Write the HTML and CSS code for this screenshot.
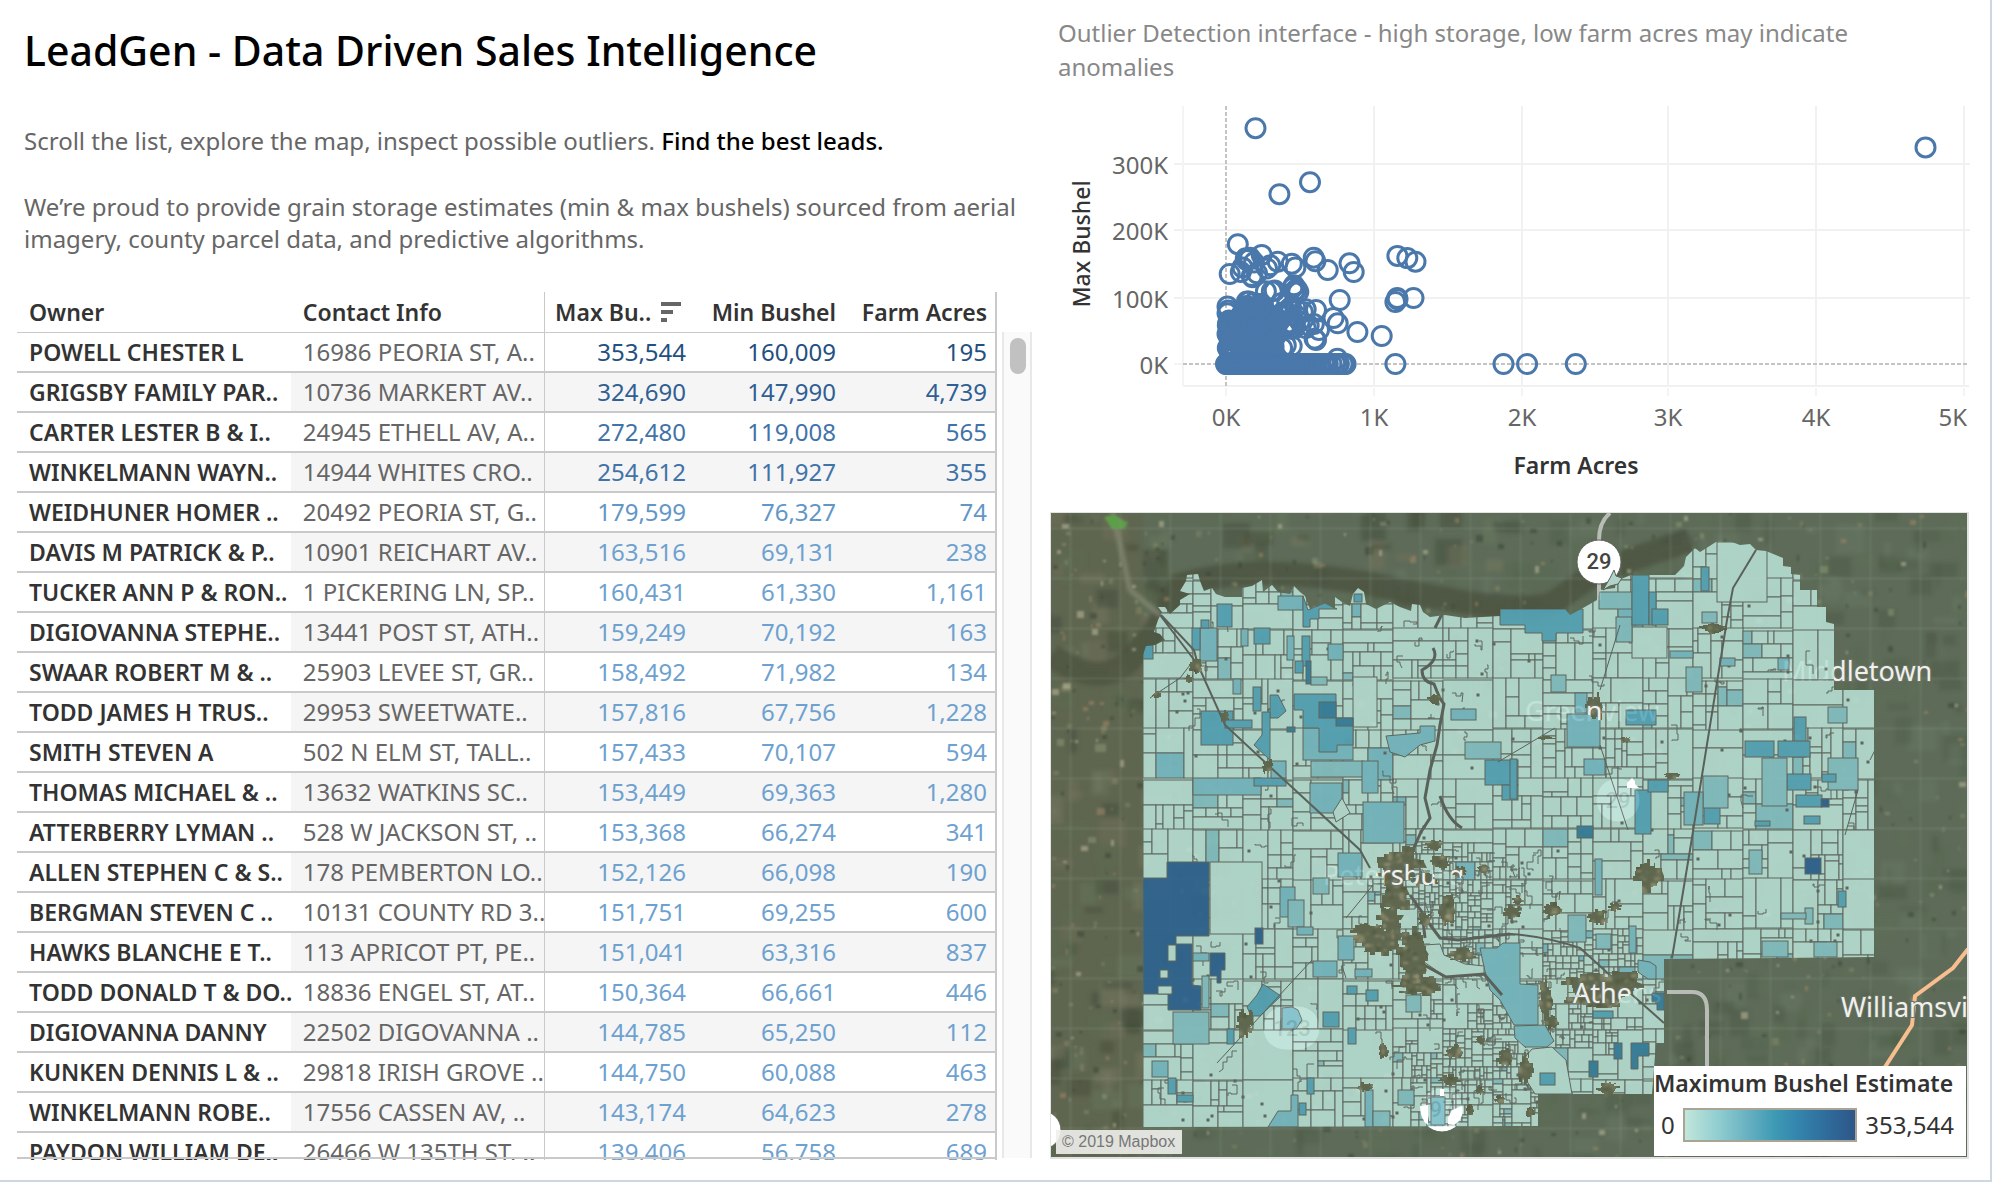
FILE: index.html
```
<!DOCTYPE html>
<html lang="en">
<head>
<meta charset="utf-8">
<title>LeadGen - Data Driven Sales Intelligence</title>
<link rel="stylesheet" href="styles.css">
</head>
<body>
<main class="dashboard">
  <section class="leads">
    <header class="intro">
      <h1>LeadGen - Data Driven Sales Intelligence</h1>
      <p>Scroll the list, explore the map, inspect possible outliers. <strong>Find the best leads.</strong></p>
      <p>We’re proud to provide grain storage estimates (min &amp; max bushels) sourced from aerial imagery, county parcel data, and predictive algorithms.</p>
    </header>
    <div class="list">
      <div class="list-view">
        <table>
          <colgroup><col class="w-owner"><col class="w-contact"><col><col><col></colgroup>
          <thead>
            <tr><th>Owner</th><th>Contact Info</th><th><span class="sortable">Max Bu.. <svg class="sort" viewBox="0 0 20 20" aria-hidden="true"><path d="M0 0h20v4H0zM0 8h12v4H0zM0 16h6v4H0z"/></svg></span></th><th>Min Bushel</th><th>Farm Acres</th></tr>
          </thead>
          <tbody>
            <tr class="t1"><th scope="row">POWELL CHESTER L</th><td>16986 PEORIA ST, A..</td><td>353,544</td><td>160,009</td><td>195</td></tr>
            <tr class="t2"><th scope="row">GRIGSBY FAMILY PAR..</th><td>10736 MARKERT AV..</td><td>324,690</td><td>147,990</td><td>4,739</td></tr>
            <tr class="t3"><th scope="row">CARTER LESTER B &amp; I..</th><td>24945 ETHELL AV, A..</td><td>272,480</td><td>119,008</td><td>565</td></tr>
            <tr class="t3"><th scope="row">WINKELMANN WAYN..</th><td>14944 WHITES CRO..</td><td>254,612</td><td>111,927</td><td>355</td></tr>
            <tr class="t4"><th scope="row">WEIDHUNER HOMER ..</th><td>20492 PEORIA ST, G..</td><td>179,599</td><td>76,327</td><td>74</td></tr>
            <tr><th scope="row">DAVIS M PATRICK &amp; P..</th><td>10901 REICHART AV..</td><td>163,516</td><td>69,131</td><td>238</td></tr>
            <tr><th scope="row">TUCKER ANN P &amp; RON..</th><td>1 PICKERING LN, SP..</td><td>160,431</td><td>61,330</td><td>1,161</td></tr>
            <tr><th scope="row">DIGIOVANNA STEPHE..</th><td>13441 POST ST, ATH..</td><td>159,249</td><td>70,192</td><td>163</td></tr>
            <tr><th scope="row">SWAAR ROBERT M &amp; ..</th><td>25903 LEVEE ST, GR..</td><td>158,492</td><td>71,982</td><td>134</td></tr>
            <tr><th scope="row">TODD JAMES H TRUS..</th><td>29953 SWEETWATE..</td><td>157,816</td><td>67,756</td><td>1,228</td></tr>
            <tr><th scope="row">SMITH STEVEN A</th><td>502 N ELM ST, TALL..</td><td>157,433</td><td>70,107</td><td>594</td></tr>
            <tr><th scope="row">THOMAS MICHAEL &amp; ..</th><td>13632 WATKINS SC..</td><td>153,449</td><td>69,363</td><td>1,280</td></tr>
            <tr><th scope="row">ATTERBERRY LYMAN ..</th><td>528 W JACKSON ST, ..</td><td>153,368</td><td>66,274</td><td>341</td></tr>
            <tr><th scope="row">ALLEN STEPHEN C &amp; S..</th><td>178 PEMBERTON LO..</td><td>152,126</td><td>66,098</td><td>190</td></tr>
            <tr><th scope="row">BERGMAN STEVEN C ..</th><td>10131 COUNTY RD 3..</td><td>151,751</td><td>69,255</td><td>600</td></tr>
            <tr><th scope="row">HAWKS BLANCHE E T..</th><td>113 APRICOT PT, PE..</td><td>151,041</td><td>63,316</td><td>837</td></tr>
            <tr><th scope="row">TODD DONALD T &amp; DO..</th><td>18836 ENGEL ST, AT..</td><td>150,364</td><td>66,661</td><td>446</td></tr>
            <tr><th scope="row">DIGIOVANNA DANNY</th><td>22502 DIGOVANNA ..</td><td>144,785</td><td>65,250</td><td>112</td></tr>
            <tr><th scope="row">KUNKEN DENNIS L &amp; ..</th><td>29818 IRISH GROVE ..</td><td>144,750</td><td>60,088</td><td>463</td></tr>
            <tr><th scope="row">WINKELMANN ROBE..</th><td>17556 CASSEN AV, ..</td><td>143,174</td><td>64,623</td><td>278</td></tr>
            <tr><th scope="row">PAYDON WILLIAM DE..</th><td>26466 W 135TH ST, ..</td><td>139,406</td><td>56,758</td><td>689</td></tr>
          </tbody>
        </table>
      </div>
      <div class="scrollbar"><div class="thumb"></div></div>
    </div>
  </section>

  <section class="visuals">
    <h2>Outlier Detection interface - high storage, low farm acres may indicate anomalies</h2>
    <svg class="scatter" viewBox="0 0 919 397" role="img" aria-label="Max Bushel by Farm Acres">
      <path class="grid" d="M324 6v280M472 6v280M618 6v280M766 6v280M914 6v280M124 64h796M124 130h796M124 198h796M133 286h786"/>
      <path class="edge" d="M133 6v280M124 264h9M176 288v8M324 288v8M472 288v8M618 288v8M766 288v8M914 288v8"/>
      <path class="zero" d="M176 6v280M133 264h786"/>
      <g id="marks" class="marks"></g>
      <g class="tick end"><text x="118" y="74">300K</text><text x="118" y="140">200K</text><text x="118" y="208">100K</text><text x="118" y="274">0K</text><text x="917" y="326">5K</text></g>
      <g class="tick mid"><text x="176" y="326">0K</text><text x="324" y="326">1K</text><text x="472" y="326">2K</text><text x="618" y="326">3K</text><text x="766" y="326">4K</text></g>
      <text class="axis" x="526" y="374">Farm Acres</text>
      <text class="axis y" transform="translate(40 144) rotate(-90)">Max Bushel</text>
    </svg>
    <div class="map">
      <svg class="map-art" viewBox="1051 513 916 644" preserveAspectRatio="xMinYMin slice" role="img" aria-label="Parcel map of maximum bushel estimates">
        <defs>
          <filter id="soft" x="0" y="0" width="1" height="1"><feGaussianBlur stdDeviation="2"/></filter>
          <filter id="hazy" x="0" y="0" width="1" height="1"><feGaussianBlur stdDeviation="1"/></filter>
          <clipPath id="county"><path d="M1143 662V655L1146 646 1155 645 1165 640 1160 634 1154 632 1158 620 1162 612 1158 607 1165 607 1170 614 1180 605 1180 600 1190 594 1180 591 1186 581 1187 575 1198 574 1200 581 1204 591 1212 588 1216 594 1225 597 1242 597V588L1252 586 1262 580 1263 592 1272 585 1278 592 1290 594 1294 586 1300 592 1305 596 1310 609 1325 603 1335 609V597L1342 602 1350 606 1353 594 1358 588 1364 592 1366 604 1376 609 1390 602 1400 607 1411 611 1412 604 1420 605 1423 612 1430 617 1445 615 1465 618 1500 616V609H1565L1570 615 1583 608 1597 600 1600 590 1615 588 1616 581 1631 575H1675L1684 566 1686 557 1695 548 1700 552 1716 542H1732L1740 545 1750 544 1756 550 1766 551 1783 558V566L1791 567V574L1800 575V590H1817V607H1826V622L1834 624V690H1874V957L1664 959V1043H1656L1652 1094H1538V1126L1143 1127Z"/></clipPath>
          <mask id="holes"><path fill="#fff" d="M1051 513h916v644h-916z"/><g id="towns-mask" fill="#000"></g></mask>
        </defs>
        <path fill="#5d6b58" d="M1051 513h916v644h-916z"/>
        <g id="ground" filter="url(#soft)"></g>
        <g id="specks" filter="url(#hazy)"></g>
        <g id="towns"></g>
        <path class="highway" d="M1610 513Q1599 522 1599 540V600M1667 992H1692Q1707 992 1707 1010V1070"/>
        <path class="interstate" d="M1968 949L1953 968 1915 996 1912 1025 1885 1067"/>
        <g class="place"><text x="1782" y="681">Middletown</text><text x="1525" y="721">Greenview</text><text x="1323" y="885">Petersburg</text><text x="1573" y="1003">Athens</text><text x="1841" y="1017">Williamsville</text></g>
        <g class="shield"><circle cx="1599" cy="562" r="22"/><circle cx="1618" cy="800" r="22"/><rect x="1263" y="1006" width="57" height="44" rx="22"/><circle cx="1442" cy="1110" r="22"/><circle cx="1042" cy="1130" r="19"/><text x="1599" y="569">29</text><text x="1618" y="808">29</text><text x="1292" y="1036">123</text><text x="1442" y="1117">97</text></g>
        <g clip-path="url(#county)"><g mask="url(#holes)">
          <g class="parcels">
            <path fill="#b9e1d5" d="M1051 513h916v644h-916z"/>
            <g id="parcels"></g>
            <path class="rail" d="M1160 615L1198 665 1225 725 1268 765 1360 850 1370 868M1161 615L1194 650 1198 665M1756 550L1733 588 1727 620 1690 850 1672 958M1510 934Q1545 936 1580 948L1612 977 1664 1023"/>
            <path class="lane" d="M1312 960L1217 1063M1373 885L1346 918M1555 728L1498 762M1600 745L1628 830M1150 698L1180 678 1190 665M1858 790L1845 835M1900 700L1870 760M1620 625L1600 690"/>
            <path class="river" d="M1433 648Q1440 660 1422 670 1422 682 1434 684 1440 700 1444 704L1440 725 1437 745 1430 770 1425 798 1430 818 1421 832 1412 852 1410 862M1442 614L1435 628M1410 895L1422 912 1425 938M1425 918L1440 938 1458 940 1510 934M1424 965L1446 977 1484 974 1502 995M1440 796Q1448 820 1462 828"/>
          </g>
        </g></g>
        <g fill="#fff"><path d="M1627 783l5-5 3 3v3l4 4h-12zM1420 1106l8-1v20q-8-6-8-19zM1440 1089h4v7h-4zM1448 1124v-6l4-8 10-4q3 12-8 19z"/></g>
        <path fill="#b0d5c8" stroke="#5c6059" d="M1610 578l4-8 2 6 6 2-4 6-8 2-7 4z"/>
      </svg>
      <span class="credit">© 2019 Mapbox</span>
      <aside class="legend">
        <h3>Maximum Bushel Estimate</h3>
        <div class="scale"><span>0</span><div class="ramp"></div><span>353,544</span></div>
      </aside>
    </div>
  </section>
</main>
<script src="charts.js"></script>
</body>
</html>
```
FILE: styles.css
```
* { box-sizing: border-box; }

body {
  margin: 0;
  background: #fff;
  color: #666;
  font: 24px/32px "Noto Sans", sans-serif;
}

h1, h2, h3, p { margin: 0; font-weight: 400; }

.dashboard {
  display: grid;
  grid-template-columns: minmax(0, 1032fr) minmax(0, 958fr);
  height: 100vh;
  min-height: 800px;
  border-right: 2px solid #cdd7e2;
  border-bottom: 2px solid #cdd7e2;
}

.leads {
  display: flex;
  flex-direction: column;
  min-height: 0;
  padding: 0 0 20px 17px;
}

.intro { padding: 18px 8px 37px 7px; }
.intro h1 { margin-bottom: 43px; color: #000; font-size: 41px; font-weight: 500; line-height: 64px; }
.intro p + p { margin-top: 34px; }
.intro strong { color: #000; font-weight: 500; }

.list { display: flex; flex: 1; gap: 5px; min-height: 0; }
.list-view { position: relative; flex: 1; overflow: hidden; }
.list-view::after {
  content: "";
  position: absolute;
  right: 0;
  bottom: 1px;
  left: 0;
  height: 2px;
  background: #c9c9c9;
}

table { width: 100%; table-layout: fixed; border-spacing: 0; border-right: 2px solid #c9c9c9; }
.w-owner { width: 28%; }
.w-contact { width: 26%; }

th, td {
  height: 40px;
  padding: 0 8px 0 12px;
  border-bottom: 2px solid #c9c9c9;
  font-weight: 400;
  line-height: 36px;
  text-align: right;
  white-space: nowrap;
}
th:nth-child(1), td:nth-child(2), thead th:nth-child(-n+3) { padding-right: 0; text-align: left; }
th:nth-child(2), td:nth-child(2) { border-right: 1px solid #c9c9c9; }
th:nth-child(3), td:nth-child(3), th:nth-child(4), td:nth-child(4) { padding-right: 9px; }
thead th { height: 41px; border-bottom-width: 1px; color: #333; font-size: 23px; font-weight: 600; }
thead th:nth-child(3) { padding-left: 10px; }
tbody th { color: #333; font-size: 23px; font-weight: 600; }
tbody td { color: #6ea1cf; }
tbody td:nth-child(2) { color: #666; }
tbody tr:nth-child(even) td { background: #f5f5f5; }
.t1 td { color: #24507f; }
.t2 td { color: #2f5f93; }
.t3 td { color: #4173a8; }
.t4 td { color: #6296c6; }
.sortable { display: flex; align-items: center; gap: 10px; }
.sort { width: 20px; height: 20px; fill: #666; }

.scrollbar {
  width: 30px;
  margin: 40px 0 2px;
  padding: 6px;
  border: solid #e8e8e8;
  border-width: 0 2px;
  background: #fafafa;
}
.thumb { width: 16px; height: 36px; border-radius: 8px; background: #c1c1c1; }

.visuals {
  display: flex;
  flex-direction: column;
  min-height: 0;
  padding: 16px 21px 21px 18px;
}
.visuals h2 { padding: 0 40px 16px 8px; color: #888; font-size: 24px; line-height: 34px; }

.scatter { display: block; width: 100%; margin-bottom: 15px; overflow: visible; }
.grid, .edge { fill: none; stroke: #f1f1f1; stroke-width: 2; }
.edge { stroke: #f4f4f4; }
.zero { fill: none; stroke: #c4c4c4; stroke-width: 2; stroke-dasharray: 4 2; }
.marks { fill: none; stroke: #4a78ab; stroke-width: 3; }
.scatter text { font-size: 24px; fill: #666; }
.end { text-anchor: end; }
.mid { text-anchor: middle; }
.scatter .axis { fill: #333; font-size: 23px; font-weight: 600; text-anchor: middle; }
.scatter .y { font-weight: 500; }

.map {
  position: relative;
  flex: 1;
  min-height: 0;
  border: 1px solid #e2e2e2;
  border-width: 1px 2px 2px 1px;
  overflow: hidden;
}
.map-art { position: absolute; display: block; width: 100%; height: 100%; }
.highway { fill: none; stroke: #b9bcb6; stroke-width: 4; }
.interstate { fill: none; stroke: #f9be90; stroke-width: 4; }
.place { fill: #f0f0ec; stroke: #6b7266; stroke-width: 2; paint-order: stroke; font-size: 27px; }
.shield circle, .shield rect { fill: #fff; stroke: #5c6356; stroke-width: 1; }
.shield text { fill: #444; font: 500 22px Roboto, sans-serif; text-anchor: middle; }
.parcels { opacity: .88; }
#parcels { stroke: #5f6660; stroke-width: 1; }
.rail, .lane, .river { fill: none; stroke: #5a605a; stroke-width: 2; }
.rail { stroke-width: 2; }
.lane { stroke-width: 1; }
.river { stroke-width: 3; }

.credit {
  position: absolute;
  bottom: 3px;
  left: 5px;
  padding: 0 7px 0 6px;
  background: rgba(240, 240, 236, .9);
  color: #777;
  font: 16px/24px "Liberation Sans", Arial, sans-serif;
}

.legend {
  position: absolute;
  right: 1px;
  bottom: 1px;
  width: 312px;
  height: 90px;
  background: #fff;
  color: #333;
}
.legend h3 { font-size: 23px; font-weight: 600; line-height: 34px; white-space: nowrap; }
.scale { display: flex; align-items: center; gap: 8px; padding: 8px 12px 0 7px; line-height: 34px; }
.ramp {
  flex: 1;
  height: 34px;
  border: 2px solid #a9a493;
  background: linear-gradient(90deg, #c2e6da, #8fcdd0 20%, #6ab2c2 36%, #3f9bb5 52%, #3487ae 65%, #2f6b9b 84%, #2d5788);
}
```
FILE: charts.js
```
// Small seeded generator, so that every visit draws the same picture.
let seed = 29;
const rnd = () => {
  seed = (seed * 1664525 + 1013904223) >>> 0;
  return seed / 4294967296;
};
const put = (id, markup) => { document.getElementById(id).innerHTML = markup; };

// ---- Scatter: [farm acres, thousand bushels] ----
const points = [
  [200, 353.5], [4739, 324.7], [569, 272.5], [362, 254.6], [80, 179.6], [242, 163.5],
  [1161, 162], [163, 159.2], [134, 158.5], [1228, 158.8], [594, 159.4], [1284, 153.4],
  [350, 153.4], [190, 152.1], [606, 154], [837, 151], [446, 150.4], [112, 144.8],
  [470, 144.7], [278, 143.2], [689, 141], [25, 135], [865, 138], [100, 138], [180, 130],
  [150, 158], [210, 136], [140, 156], [175, 132], [300, 148], [770, 96], [1270, 99],
  [1160, 99], [1148, 93], [1162, 97], [890, 48], [1055, 42], [728, 69], [757, 61],
  [755, 8], [1148, 0], [1880, 0], [2040, 0], [2370, 0], [610, 81], [600, 38], [595, 60],
  [610, 36], [630, 51], [330, 110], [270, 109], [310, 109], [460, 118],
  [460, 108], [480, 112], [470, 110], [490, 108], [450, 114], [10, 86], [15, 80], [10, 76],
  [12, 58], [10, 45], [12, 24], [540, 82], [520, 78], [560, 58], [500, 64], [440, 85],
  [470, 84], [430, 62], [455, 60], [445, 27], [405, 28], [380, 24], [540, 54], [480, 72]
];
for (let i = 0; i < 170; i++) {
  const a = 12 + 320 * rnd();
  points.push([a, 16 + (a < 100 ? 50 : 74 - Math.abs(a - 190) * 0.15) * Math.pow(rnd(), 0.95)]);
}
for (let i = 0; i < 16; i++) points.push([330 + 140 * rnd(), 52 + 40 * rnd()]);
for (let i = 0; i < 14; i++) points.push([130 + 110 * rnd(), 82 + 12 * rnd()]);
for (let a = 0; a < 620; a += 5) points.push([a, 0]);
for (const a of [640, 665, 690, 715, 740, 760, 765, 790, 805, 810]) points.push([a, 0]);
put('marks', points.map(([a, k]) =>
  `<circle cx="${(176 + a * 0.1476).toFixed(1)}" cy="${(264 - k * 0.667).toFixed(1)}" r="9.5"/>`).join(''));

// ---- Aerial ground ----
const rect = (x, y, w, h, fill, o = 1) =>
  `<rect x="${x | 0}" y="${y | 0}" width="${w | 0}" height="${h | 0}" fill="${fill}" fill-opacity="${o}"/>`;
const pick = list => list[Math.floor(rnd() * list.length)];
let ground = '<path d="M1051 513h92v644h-92z" fill="#605f48" fill-opacity=".5"/>';
for (let i = 0; i < 900; i++) {
  const x = 1036 + 934 * rnd(), y = 500 + 665 * rnd();
  const west = x < 1160 || (x < 1500 && y < 560);
  ground += rect(x, y, 6 + 24 * rnd(), 6 + 24 * rnd(),
    pick(west ? ['#434b35', '#77735a', '#3f4a3a', '#7c7c64', '#5e6b50', '#6a7a60'] : ['#4c5c48', '#5f7059', '#6a7a66', '#4a5942', '#58694f']), 0.42);
}
ground += '<path d="M1051 655Q1100 690 1130 660T1180 585Q1260 560 1400 590T1560 598L1600 570 1690 540" fill="none" stroke="#4b523f" stroke-opacity=".75" stroke-width="24"/><path d="M1110 500L1130 590 1160 615" fill="none" stroke="#8b8f78" stroke-width="3"/>';
let specks = '<path fill="#5d9e48" d="M1104 517l10-2 14 8-4 6h-12z"/>';
for (let i = 0; i < 900; i++) {
  const x = 1051 + 916 * Math.pow(rnd(), 1.2), y = 513 + 644 * rnd(), s = 1 + 4 * rnd() * rnd();
  specks += rect(x, y, 2 + 2 * s * rnd(), 1 + 1.6 * s, pick(['#8a8a68', '#a88a68', '#8f9a78', '#c8c2a2', '#39442f', '#39442f']), 0.5);
}
for (let y = 528; y < 1157; y += 50) specks += rect(1051, y, 916, 1, '#8a9a86', 0.45);
for (let x = 1070; x < 1967; x += 50) specks += rect(x, 513, 1, 644, '#8a9a86', 0.4);
put('ground', ground);
put('specks', specks);

// ---- Built-up areas and timber, left out of the parcel layer: x, y, half width, half height ----
const towns = [
  [1398, 868, 22, 18], [1396, 895, 13, 22], [1390, 920, 12, 14], [1378, 940, 20, 14], [1415, 955, 16, 24],
  [1420, 985, 22, 10], [1366, 933, 14, 9], [1447, 910, 8, 13], [1440, 862, 10, 7], [1512, 912, 8, 7],
  [1425, 880, 12, 6], [1460, 872, 7, 5], [1434, 845, 8, 5], [1483, 868, 5, 4], [1425, 920, 7, 7],
  [1595, 708, 9, 13], [1590, 985, 24, 12], [1622, 985, 19, 13], [1600, 1000, 28, 8],
  [1649, 876, 13, 15], [1196, 666, 7, 8], [1189, 679, 4, 4], [1245, 1025, 8, 14], [1157, 695, 4, 3],
  [1713, 628, 12, 5], [1552, 910, 9, 7], [1597, 918, 9, 7], [1546, 1000, 7, 20], [1552, 1022, 6, 8],
  [1455, 1052, 8, 7], [1450, 1080, 9, 5], [1525, 1068, 7, 14], [1505, 1058, 8, 8], [1365, 1087, 8, 4],
  [1672, 776, 8, 3], [1434, 699, 6, 5], [1225, 717, 4, 6], [1268, 766, 5, 7], [1464, 955, 14, 6],
  [1608, 1088, 10, 6], [1625, 740, 5, 3], [1544, 738, 10, 2], [1615, 907, 6, 4], [1383, 1050, 5, 8],
  [1530, 1112, 5, 5], [1500, 1100, 5, 4], [1480, 1090, 4, 4], [1470, 1110, 4, 6], [1518, 900, 5, 5], [1480, 1040, 5, 4]
];
const blob = ([x, y, w, h]) => {
  let d = '';
  for (let i = 0; i < 22; i++) {
    const a = i * Math.PI / 11, k = 0.65 + 0.65 * rnd();
    const px = Math.round(x + w * k * Math.cos(a)), py = Math.round(y + h * k * Math.sin(a));
    d += i ? `H${px}V${py}` : `M${px} ${py}`;
  }
  return `<path d="${d}Z"/>`;
};
put('towns-mask', towns.map(blob).join(''));
put('towns', `<g filter="url(#hazy)">${towns.map(([x, y, w, h]) => {
  let s = rect(x - w * 1.3, y - h * 1.3, w * 2.6, h * 2.6, '#5f684f');
  for (let i = 0; i < w * h / 7; i++) {
    s += rect(x + w * (2.4 * rnd() - 1.2), y + h * (2.4 * rnd() - 1.2), 2 + 5 * rnd(), 2 + 4 * rnd(), pick(['#8d8d6c', '#4c553b', '#6f7658', '#a59f80']), 0.6);
  }
  return s;
}).join('')}</g>`);

// ---- Parcels ----
const tone = { a: '#b9e1d5', b: '#86c3c7', c: '#78bcc7', d: '#55a7bb', e: '#35819f', f: '#2d6492' };
let parcels = '';
const near = (x, y, cx, cy, r) => Math.max(0, 1 - Math.hypot(x - cx, y - cy) / r);
const split = (x, y, w, h) => {
  const cx = x + w / 2, cy = y + h / 2;
  const busy = Math.max(near(cx, cy, 1480, 1070, 110), near(cx, cy, 1440, 900, 100), near(cx, cy, 1590, 990, 90));
  const limit = busy > 0.25 ? 6 : 11;
  const stop = (w * h < 1300 ? 0.34 : 0.07) * (1 - busy);
  if ((w < limit * 2 && h < limit * 2) || (w < 52 && h < 52 && rnd() < stop)) {
    const blue = cx < 1480 && cy < 840 && cx > 1240 ? 0.1 : cx > 1600 && cy < 860 ? 0.06 : 0.03;
    parcels += rect(x, y, w, h, rnd() < blue ? pick([tone.b, tone.c, tone.b]) : tone.a);
    return;
  }
  const f = pick([0.5, 0.5, 0.5, 0.25, 0.75, 0.35]);
  const tall = h > w * 1.4 || (w <= h * 1.4 && rnd() < 0.45);
  if (tall) {
    const k = Math.round(h * f);
    split(x, y, w, k);
    split(x, y + k, w, h - k);
  } else {
    const k = Math.round(w * f);
    split(x, y, k, h);
    split(x + k, y, w - k, h);
  }
};
for (let y = 528; y < 1130; y += 50) {
  for (let x = 1143; x < 1880; x += 50) split(x, y + Math.round(3 * rnd()), 50, 50);
}
for (let i = 0; i < 220; i++) {
  const south = i < 110;
  const x = south ? 1400 + 150 * rnd() : 1150 + 700 * rnd(), y = south ? 850 + 260 * rnd() : 620 + 470 * rnd();
  let d = `M${x | 0} ${y | 0}`;
  for (let j = 0; j < 3; j++) d += `h${(14 * rnd() - 7).toFixed(0)}v${(14 * rnd() - 5).toFixed(0)}`;
  if (i % 4 === 0) d += `l${(8 * rnd() - 4).toFixed(0)} ${(12 * rnd()).toFixed(0)}`;
  parcels += `<path fill="none" d="${d}"/>`;
}
for (let i = 0; i < 150; i++) parcels += rect(1145 + 725 * rnd(), 600 + 520 * rnd(), 2, 2, '#626c55');

// Parcels of the larger estimates: tone, then a rectangle or a list of corners.
const shaded = [
  ['a', 1210, 862, 52, 72], ['a', 1353, 677, 24, 50], ['a', 1632, 627, 35, 31], ['a', 1717, 542, 50, 60],
  ['f', [1143, 878, 1167, 878, 1167, 862, 1209, 862, 1209, 936, 1176, 936, 1176, 944, 1192, 944, 1192, 985, 1201, 986, 1201, 1010, 1168, 1010, 1168, 994, 1143, 994]],
  ['a', 1168, 945, 8, 16], ['a', 1160, 970, 8, 8], ['a', 1158, 986, 14, 8],
  ['f', 1255, 928, 8, 16], ['f', [1210, 953, 1225, 953, 1225, 970, 1221, 970, 1221, 983, 1217, 983, 1217, 976, 1210, 976]],
  ['d', 1201, 711, 32, 34], ['d', 1225, 720, 27, 8],
  ['c', 1303, 728, 50, 32],
  ['d', [1294, 694, 1336, 694, 1336, 718, 1353, 718, 1353, 745, 1337, 745, 1337, 752, 1319, 752, 1319, 728, 1303, 728, 1303, 710, 1294, 710]],
  ['e', 1319, 702, 17, 16], ['e', 1336, 718, 17, 8], ['e', 1287, 727, 8, 5],
  ['d', 1253, 687, 8, 24], ['d', [1270, 695, 1278, 695, 1286, 711, 1278, 718, 1270, 718]],
  ['d', [1262, 712, 1270, 712, 1270, 760, 1254, 745, 1262, 735]],
  ['c', 1193, 778, 68, 17], ['d', 1254, 778, 32, 8], ['c', 1271, 761, 15, 17],
  ['d', 1485, 760, 33, 25], ['d', 1502, 785, 16, 15], ['c', 1363, 802, 41, 41], ['c', 1310, 783, 32, 30],
  ['a', [1342, 798, 1350, 813, 1336, 822, 1333, 812]],
  ['c', [1386, 736, 1420, 733, 1420, 726, 1435, 726, 1435, 741, 1420, 745, 1405, 757, 1390, 752]],
  ['c', 1451, 709, 25, 11], ['b', 1465, 742, 36, 17], ['b', 1311, 761, 52, 16], ['c', 1362, 761, 16, 32],
  ['d', [1500, 609, 1583, 609, 1583, 633, 1556, 633, 1556, 641, 1542, 641, 1542, 633, 1525, 633, 1525, 625, 1500, 625]],
  ['c', 1200, 628, 17, 33], ['d', 1192, 628, 8, 22], ['d', 1217, 604, 15, 23], ['d', 1201, 620, 8, 8],
  ['c', 1278, 596, 25, 14], ['d', [1303, 596, 1308, 610, 1325, 603, 1337, 609, 1319, 609, 1319, 619, 1310, 619, 1310, 627, 1303, 627]],
  ['d', 1302, 636, 8, 30], ['e', 1306, 661, 5, 23], ['d', 1295, 661, 8, 12], ['d', 1254, 628, 16, 16], ['c', 1328, 644, 15, 16],
  ['c', 1287, 636, 7, 24], ['b', 1311, 677, 16, 8], ['c', 1233, 679, 8, 15], ['c', 1241, 629, 7, 17], ['d', 1143, 645, 10, 14],
  ['d', 1354, 594, 8, 8],
  ['b', 1599, 592, 33, 17], ['b', 1616, 617, 16, 25], ['d', 1632, 575, 17, 50], ['d', 1649, 592, 7, 33], ['d', 1652, 609, 16, 16],
  ['d', 1701, 567, 8, 24], ['b', 1702, 612, 15, 11], ['c', 1720, 658, 15, 8], ['c', 1778, 658, 11, 12], ['c', 1670, 651, 23, 7],
  ['b', 1686, 667, 16, 25], ['d', 1626, 710, 30, 15], ['c', 1567, 714, 33, 33], ['c', 1575, 693, 12, 20], ['b', 1551, 675, 15, 17],
  ['d', 1745, 741, 29, 16], ['d', 1794, 717, 12, 40], ['d', 1778, 741, 32, 16], ['d', 1787, 774, 24, 16], ['b', 1828, 758, 30, 32],
  ['d', 1822, 774, 14, 8], ['d', 1796, 795, 26, 12], ['f', 1821, 799, 8, 8], ['d', 1704, 800, 16, 24], ['b', 1703, 776, 25, 32],
  ['b', 1762, 758, 25, 48], ['e', 1577, 826, 16, 12], ['d', 1635, 790, 16, 44], ['d', 1648, 780, 20, 12], ['c', 1584, 759, 21, 16],
  ['b', 1828, 707, 19, 16], ['d', 1510, 759, 7, 40], ['d', 1804, 816, 16, 8], ['d', 1755, 821, 15, 5], ['c', 1684, 792, 19, 33],
  ['f', 1805, 858, 16, 16], ['b', 1749, 850, 13, 24], ['d', 1838, 891, 8, 16], ['b', 1762, 941, 26, 16],
  ['b', 1814, 942, 23, 15], ['b', 1805, 908, 8, 16], ['b', 1781, 913, 25, 6], ['c', 1595, 859, 7, 36], ['b', 1568, 915, 18, 27],
  ['b', 1596, 934, 15, 15], ['c', 1629, 926, 7, 27], ['e', 1614, 1043, 8, 16], ['e', [1631, 1043, 1649, 1043, 1649, 1056, 1638, 1056, 1638, 1069, 1631, 1069]],
  ['e', 1589, 1061, 9, 16], ['d', 1593, 1011, 20, 7], ['e', [1652, 993, 1664, 993, 1664, 1010, 1657, 1010, 1657, 1002, 1652, 1002]],
  ['c', 1619, 967, 16, 8], ['c', [1638, 960, 1650, 962, 1656, 966, 1656, 979, 1648, 979, 1638, 972]],
  ['c', [1480, 948, 1497, 948, 1503, 943, 1520, 943, 1520, 984, 1538, 985, 1538, 1025, 1514, 1025, 1500, 1000, 1490, 990, 1484, 967]],
  ['c', [1514, 1026, 1545, 1025, 1554, 1041, 1547, 1047, 1525, 1047, 1515, 1038]],
  ['a', [1526, 1056, 1532, 1049, 1552, 1047, 1566, 1060, 1572, 1094, 1535, 1094, 1523, 1075]],
  ['d', 1540, 1073, 15, 12],
  ['a', [1424, 945, 1440, 944, 1444, 955, 1465, 964, 1484, 966, 1484, 974, 1446, 977, 1424, 962]],
  ['d', [1263, 984, 1281, 996, 1260, 1016, 1251, 1016, 1247, 1007, 1257, 995]],
  ['c', [1282, 1008, 1292, 1007, 1298, 1010, 1302, 1020, 1296, 1029, 1282, 1029]],
  ['d', 1323, 1012, 16, 15], ['d', 1348, 1028, 8, 16], ['d', 1227, 1029, 7, 15], ['c', 1338, 936, 16, 24], ['b', 1313, 878, 16, 16],
  ['c', 1280, 887, 15, 30], ['b', 1288, 900, 16, 27], ['c', 1297, 927, 16, 8], ['c', 1313, 961, 24, 16], ['d', 1168, 1078, 8, 16],
  ['d', 1177, 1095, 16, 7], ['c', 1152, 1061, 16, 16], ['b', 1173, 1012, 36, 32], ['d', 1307, 1078, 7, 16], ['d', 1299, 1103, 7, 12],
  ['c', [1268, 1127, 1278, 1111, 1291, 1111, 1291, 1095, 1298, 1095, 1298, 1127]], ['c', 1365, 1090, 8, 37], ['b', 1373, 1111, 17, 16],
  ['b', 1398, 1090, 16, 15], ['c', 1355, 969, 17, 8], ['d', 1347, 986, 10, 8], ['d', 1366, 990, 12, 11], ['c', 1338, 853, 24, 24],
  ['c', 1193, 953, 16, 8], ['b', 1202, 976, 7, 32], ['b', 1406, 995, 15, 17], ['c', 1431, 1097, 14, 28]
];
for (const [t, ...g] of shaded) {
  parcels += Array.isArray(g[0]) ? `<polygon points="${g[0].join(' ')}" fill="${tone[t]}"/>` : rect(...g, tone[t]);
}
put('parcels', parcels);
```
